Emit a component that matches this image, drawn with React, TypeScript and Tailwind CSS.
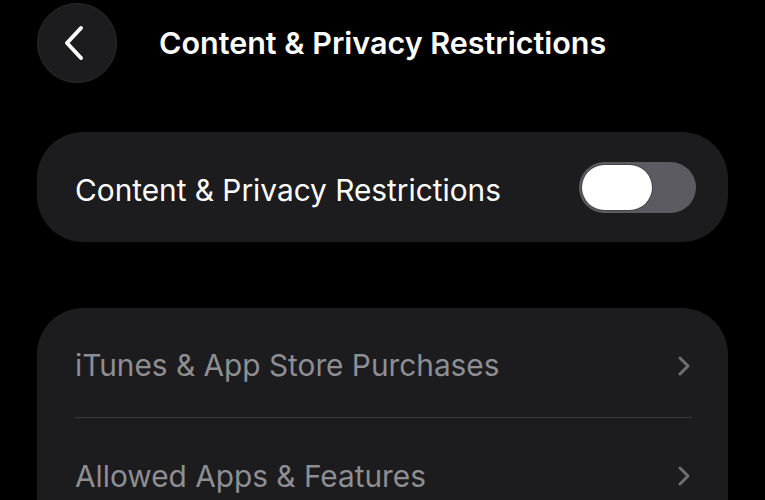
import React from 'react';

const ChevronRight = () => (
  <svg width="16" height="24" viewBox="0 0 16 24" fill="none">
    <path d="M4 4l8 8-8 8" stroke="#6e6e73" strokeWidth="3" strokeLinecap="round" strokeLinejoin="round" />
  </svg>
);

const rows = ['iTunes & App Store Purchases', 'Allowed Apps & Features'];

export default function App() {
  return (
    <div className="w-[765px] h-[500px] overflow-hidden bg-black text-white" style={{ fontFamily: 'Inter, "Noto Sans", sans-serif' }}>
      {/* Header */}
      <header className="flex items-center pl-[37px] pt-[3px]">
        <button className="w-[80px] h-[80px] rounded-full bg-[#1c1c1e] border border-[#2c2c2e] flex items-center justify-center">
          <svg width="32" height="40" viewBox="0 0 32 40" fill="none" className="-ml-[6px]">
            <path d="M23 5L9 20l14 15" stroke="white" strokeWidth="4" strokeLinecap="round" strokeLinejoin="round" />
          </svg>
        </button>
        <h1 className="ml-[42px] text-[30.5px] font-semibold">Content &amp; Privacy Restrictions</h1>
      </header>

      {/* Toggle card */}
      <section className="mx-[37px] mt-[49px] h-[110px] rounded-[46px] bg-[#1c1c1e] flex items-center justify-between pl-[38px] pr-[32px]">
        <span className="text-[29.8px] pt-[6px]">Content &amp; Privacy Restrictions</span>
        <div className="w-[117px] h-[51px] rounded-full bg-[#5c5b61] p-[3px] flex items-center">
          <div className="w-[70px] h-[45px] rounded-full bg-white shadow-[0_0_0_1px_rgba(0,0,0,0.25)]" />
        </div>
      </section>

      {/* List card */}
      <section className="mx-[37px] mt-[66px] rounded-t-[46px] bg-[#1c1c1e] pl-[38px] pr-[36px]">
        {rows.map((label, i) => (
          <div key={label} className={`h-[110px] flex items-center justify-between pt-[6px] ${i === 0 ? 'border-b border-[#38383a]' : ''}`}>
            <span className="text-[29.8px] text-[#8e8e93]">{label}</span>
            <ChevronRight />
          </div>
        ))}
      </section>
    </div>
  );
}
